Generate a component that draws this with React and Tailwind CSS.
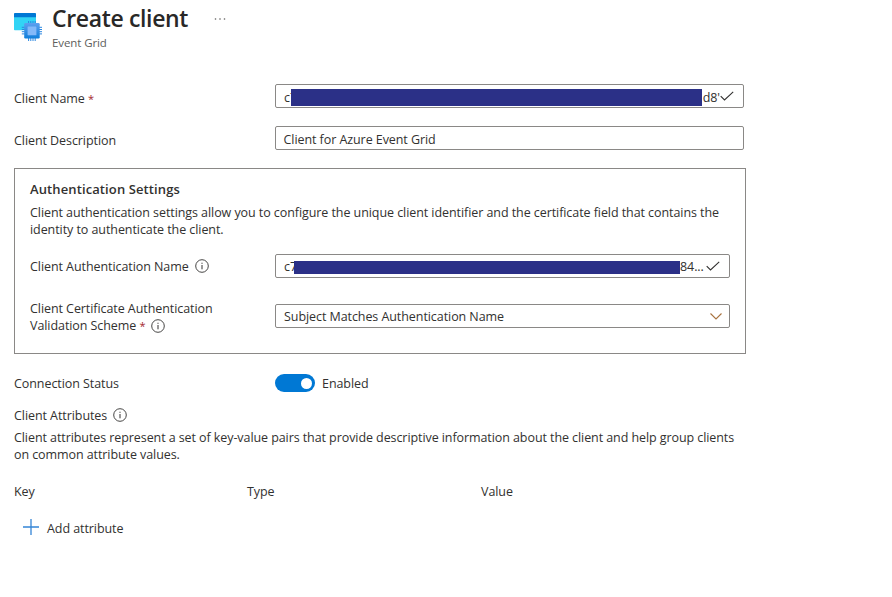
import React from "react";

function InfoIcon({ className = "" }) {
  return (
    <svg className={`h-[14px] w-[14px] shrink-0 ${className}`} viewBox="0 0 14 14" fill="none" stroke="#323130">
      <circle cx="7" cy="7" r="6.3" strokeWidth="0.9" />
      <path d="M7 6v4.3" strokeWidth="1" />
      <path d="M7 3.7v1.1" strokeWidth="1.1" />
    </svg>
  );
}

function CheckIcon() {
  return (
    <svg className="h-[10px] w-[14px] shrink-0" viewBox="0 0 14 10" fill="none" stroke="#323130" strokeWidth="1.1">
      <path d="M.7 5.1l3.8 3.8L13.2.8" />
    </svg>
  );
}

function ClientIcon() {
  return (
    <svg className="h-[30px] w-[29px] shrink-0" viewBox="0 0 29 30">
      <defs>
        <linearGradient id="chip" x1="0" y1="0" x2="0" y2="1">
          <stop offset="0" stopColor="#5ea0ef" />
          <stop offset="1" stopColor="#0f7fdb" />
        </linearGradient>
      </defs>
      <path d="M0 5h22v12.500q0 .8-.8.8H.8q-.8 0-.8-.8z" fill="#32d4f5" />
      <path d="M.8 1h20.400q.8 0 .8.8V5.300H0V1.800Q0 1 .8 1z" fill="#0078d4" />
      <path
        d="M14.600 9v3M16.800 9v3M19 9v3M21.200 9v3M14.600 26v3M16.800 26v3M19 26v3M21.200 26v3M7.800 15.300h3M7.800 17.500h3M7.800 19.700h3M7.800 21.900h3M25 15.300h3M25 17.500h3M25 19.700h3M25 21.900h3"
        stroke="#2a86e0"
        strokeWidth="1"
      />
      <rect x="10.200" y="11" width="15.500" height="15.500" rx="1.200" fill="url(#chip)" />
      <rect x="13.600" y="14.500" width="8.800" height="8.800" rx=".4" fill="#83b9f9" />
    </svg>
  );
}

function Required() {
  return <span className="text-[11px] text-[#a4262c]">*</span>;
}

const field = "flex h-6 shrink-0 items-center rounded-[2px] border border-[#8a8886] bg-white";

export default function App() {
  return (
    <main className="h-[597px] w-[892px] overflow-hidden bg-white pl-[14px] font-['Open_Sans','Noto_Sans',sans-serif] text-[12.5px] leading-[17px] tracking-[-0.07px] whitespace-nowrap text-[#323130]">
      <header className="flex h-[84px] pt-[6px]">
        <div className="w-[38px] pt-[6px]"><ClientIcon /></div>
        <div className="w-[162px]">
          <h1 className="h-[24px] text-[23px] leading-[24px] font-semibold tracking-[-0.35px] text-[#292827]">Create client</h1>
          <p className="pt-[5px] text-[11.5px] leading-[16px] tracking-[-0.1px] text-[#605e5c]">Event Grid</p>
        </div>
        <svg className="mt-[11px] h-[4px] w-[14px]" viewBox="0 0 14 4" fill="#605e5c">
          <circle cx="1.500" cy="2" r=".8" /><circle cx="6" cy="2" r=".8" /><circle cx="10.500" cy="2" r=".8" />
        </svg>
      </header>

      <div className="flex h-[42px]">
        <label className="w-[261px] pt-[6px]">Client Name <Required /></label>
        <div className={`${field} relative w-[469px] justify-between pr-[9px] pl-[8px]`}>
          <span className="pt-[2px]">c7</span>
          <span className="absolute top-[4px] left-[15px] h-[17px] w-[411px] bg-[#2b3087]" />
          <span className="ml-auto pt-[2px]">d8'</span>
          <CheckIcon />
        </div>
      </div>
      <div className="flex h-[42px]">
        <label className="w-[261px] pt-[6px]">Client Description</label>
        <div className={`${field} w-[469px] pt-[2px] pl-[7.5px]`}>Client for Azure Event Grid</div>
      </div>

      <section className="h-[186px] w-[732px] border border-[#8a8886] pl-[15px]">
        <h2 className="pt-[12px] text-[13px] font-semibold tracking-[0.11px]">Authentication Settings</h2>
        <p className="h-[56px] pt-[6px]">
          Client authentication settings allow you to configure the unique client identifier and the certificate field that contains the
          <br />identity to authenticate the client.
        </p>
        <div className="flex h-[50px]">
          <div className="flex w-[245px] items-start pt-[4px]">
            Client Authentication Name<InfoIcon className="mt-[1px] ml-[6px]" />
          </div>
          <div className={`${field} relative w-[455px] pl-[8px]`}>
            <span>c7</span>
            <span className="absolute top-[6px] left-[18px] h-[13px] w-[386px] bg-[#2b3087]" />
            <span className="ml-auto w-[26px]">84...</span>
            <span className="mr-[9px]"><CheckIcon /></span>
          </div>
        </div>
        <div className="flex">
          <div className="w-[245px]">
            <div className="-mt-[4px]">Client Certificate Authentication</div>
            <div className="flex items-start">
              <span>Validation Scheme <Required /></span>
              <InfoIcon className="mt-[2px] ml-[6px]" />
            </div>
          </div>
          <div className={`${field} w-[455px] justify-between pr-[7px] pl-[8px]`}>
            Subject Matches Authentication Name
            <svg className="h-[7px] w-[12px]" viewBox="0 0 12 7" fill="none" stroke="#a8723f" strokeWidth="1.1"><path d="M.5.500L6 6L11.500.500" /></svg>
          </div>
        </div>
      </section>

      <div className="flex h-[53px] pt-[20px]">
        <span className="w-[261px] pt-[1px]">Connection Status</span>
        <span className="flex h-[18px] w-[40px] items-center justify-end rounded-full bg-[#0078d4] pr-[3.5px]">
          <span className="h-[11px] w-[11px] rounded-full bg-white" />
        </span>
        <span className="ml-[7px] pt-[1px]">Enabled</span>
      </div>
      <div className="flex h-[22px]">Client Attributes<InfoIcon className="mt-[1px] ml-[6px]" /></div>
      <p className="h-[54px] tracking-[-0.08px]">
        Client attributes represent a set of key-value pairs that provide descriptive information about the client and help group clients
        <br />on common attribute values.
      </p>
      <div className="grid h-[37px] grid-cols-[233px_234px_233px]">
        <span>Key</span><span>Type</span><span>Value</span>
      </div>
      <div className="flex pl-[9px]">
        <svg className="-mt-[1px] mr-[8px] h-[16px] w-[16px] shrink-0" viewBox="0 0 16 16" fill="none" stroke="#3585d6" strokeWidth="1.300"><path d="M0 8h16M8 0v16" /></svg>
        Add attribute
      </div>
    </main>
  );
}
